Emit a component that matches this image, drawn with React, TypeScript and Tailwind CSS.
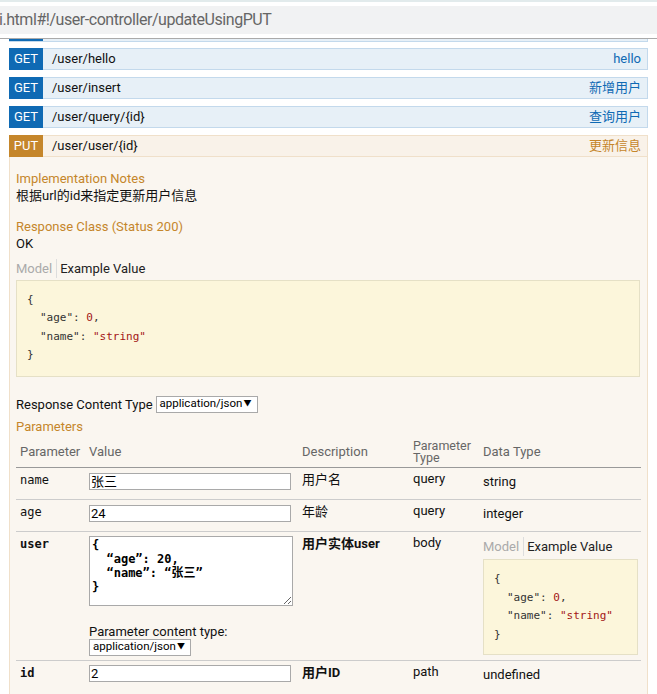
import { ReactNode } from 'react'

const sans = '[font-family:Roboto,"Noto_Sans_CJK_SC",sans-serif]'
const mono = '[font-family:"DejaVu_Sans_Mono","Noto_Sans_CJK_SC",monospace]'

function OpRow({ method, path, summary, put }: { method: string; path: string; summary: string; put?: boolean }) {
  return (
    <div
      className={`flex h-[22px] items-stretch border border-l-0 ${
        put ? 'border-[#f0e0ca] bg-[#f9f2e9]' : 'border-[#c3d9ec] bg-[#e7f0f7]'
      }`}
    >
      <div
        className={`flex w-[34px] -my-px items-center justify-center text-[13px] text-white ${
          put ? 'bg-[#c5862b]' : 'bg-[#0f6ab4]'
        }`}
      >
        {method}
      </div>
      <div className="flex flex-1 items-center pl-[9px] text-[13px] text-[#111]">{path}</div>
      <div className={`flex items-center pr-[6px] text-[13px] ${put ? 'text-[#c5862b]' : 'text-[#0f6ab4]'}`}>
        {summary}
      </div>
    </div>
  )
}

function Select({ w }: { w: string }) {
  return (
    <div
      className={`flex h-[17px] ${w} items-center justify-between border border-[#a9a9a9] bg-white pl-[3px] pr-[5px] text-[11.5px] leading-none text-black`}
    >
      <span>application/json</span>
      <span className="text-[8px]">▼</span>
    </div>
  )
}

function ModelTabs() {
  return (
    <div className="flex items-center text-[13px]">
      <span className="pr-[4px] text-[#aaa]">Model</span>
      <span className="h-[19px] w-px bg-[#ddd]" />
      <span className="pl-[3px] text-[#222]">Example Value</span>
    </div>
  )
}

function Sample({ className }: { className: string }) {
  return (
    <div
      className={`border border-[#e5e0c6] bg-[#fcf6db] text-[11px] leading-[18.5px] text-[#333] ${mono} ${className}`}
    >
      <div>{'{'}</div>
      <div className="pl-[13px]">
        "age": <span className="text-[#a31515]">0</span>,
      </div>
      <div className="pl-[13px]">
        "name": <span className="text-[#a31515]">"string"</span>
      </div>
      <div>{'}'}</div>
    </div>
  )
}

function Cell({ children, className = '' }: { children?: ReactNode; className?: string }) {
  return <div className={`px-[4px] ${className}`}>{children}</div>
}

export default function App() {
  const th = 'flex items-end pb-[7px] px-[4px] text-[13px] text-[#666]'
  const row = 'grid grid-cols-[69px_213px_111px_70px_162px]'
  const input =
    'h-[17px] w-[202px] border border-[#a9a9a9] bg-white px-[1px] text-[13px] text-black outline-none'
  return (
    <div className={`h-[694px] w-[657px] overflow-hidden bg-white ${sans}`}>
      <div className="h-[2px] bg-[#e2ebec]" />
      <div className="h-[4px]" />
      <div className="flex h-[28px] items-center bg-[#f1f2f3] text-[16px] tracking-[-0.45px] text-[#666]">
        <span className="-ml-[1px]">i.html#!/user-controller/updateUsingPUT</span>
      </div>
      <div className="h-[4px]" />
      <div className="h-px bg-[#aaa]" />

      <div className="px-[9px]">
        <div className="flex h-[3px] border-b border-r border-[#c3d9ec] bg-[#e7f0f7]">
          <div className="w-[34px] bg-[#0f6ab4]" />
        </div>
        <div className="mt-[6px] flex flex-col gap-[7px]">
          <OpRow method="GET" path="/user/hello" summary="hello" />
          <OpRow method="GET" path="/user/insert" summary="新增用户" />
          <OpRow method="GET" path="/user/query/{id}" summary="查询用户" />
          <OpRow method="PUT" path="/user/user/{id}" summary="更新信息" put />
        </div>

        <div className="h-[560px] border-x border-[#f0e0ca] bg-[#faf6f0] pl-[6px] pr-[7px] pt-[13px] text-[13px] text-[#111]">
          <div className="leading-[17px] text-[#c5862b]">Implementation Notes</div>
          <div className="leading-[17px]">根据url的id来指定更新用户信息</div>

          <div className="mt-[14px] leading-[17px] text-[#c5862b]">Response Class (Status 200)</div>
          <div className="leading-[17px]">OK</div>

          <div className="mt-[7px]">
            <ModelTabs />
          </div>
          <Sample className="mt-[1px] h-[97px] pl-[10px] pt-[10px]" />

          <div className="mt-[19px] flex items-center gap-[3px] leading-[17px]">
            <span>Response Content Type</span>
            <Select w="w-[102px]" />
          </div>
          <div className="mt-[5px] leading-[17px] text-[#c5862b]">Parameters</div>

          <div className="mt-[5px] w-[625px]">
            <div className={`${row} h-[28px] border-b border-[#999]`}>
              <div className={th}>Parameter</div>
              <div className={th}>Value</div>
              <div className={th}>Description</div>
              <div className="flex flex-col justify-end px-[4px] pb-[5px] text-[12.5px] leading-[12px] text-[#666]">
                <span>Parameter</span>
                <span>Type</span>
              </div>
              <div className={th}>Data Type</div>
            </div>

            <div className={`${row} h-[32px] border-b border-[#ccc]`}>
              <Cell className={`pt-[3px] text-[12px] ${mono}`}>name</Cell>
              <Cell className="pt-[4px]">
                <input className={input} defaultValue="张三" />
              </Cell>
              <Cell className="pt-[2px]">用户名</Cell>
              <Cell className="pt-[1px]">query</Cell>
              <Cell className="pt-[4px]">string</Cell>
            </div>

            <div className={`${row} h-[32px] border-b border-[#ccc]`}>
              <Cell className={`pt-[3px] text-[12px] ${mono}`}>age</Cell>
              <Cell className="pt-[4px]">
                <input className={input} defaultValue="24" />
              </Cell>
              <Cell className="pt-[2px]">年龄</Cell>
              <Cell className="pt-[1px]">query</Cell>
              <Cell className="pt-[4px]">integer</Cell>
            </div>

            <div className={`${row} h-[129px] border-b border-[#ccc]`}>
              <Cell className={`pt-[3px] text-[12px] font-bold ${mono}`}>user</Cell>
              <Cell className="pt-[4px]">
                <textarea
                  className={`block h-[70px] w-[204px] border border-[#a9a9a9] bg-white px-[2px] py-[1px] text-[12px] font-bold leading-[14px] text-black outline-none ${mono}`}
                  defaultValue={'{\n  “age”: 20,\n  “name”: “张三”\n}'}
                />
                <div className="mt-[18px] leading-[15px]">Parameter content type:</div>
                <Select w="w-[102px]" />
              </Cell>
              <Cell className="pt-[2px] font-bold">用户实体user</Cell>
              <Cell className="pt-[1px]">body</Cell>
              <Cell className="pt-[5px]">
                <ModelTabs />
                <Sample className="mt-[3px] h-[96px] w-[155px] pl-[10px] pt-[10px]" />
              </Cell>
            </div>

            <div className={`${row} h-[34px]`}>
              <Cell className={`pt-[3px] text-[12px] font-bold ${mono}`}>id</Cell>
              <Cell className="pt-[3px]">
                <input className={input} defaultValue="2" />
              </Cell>
              <Cell className="pt-[2px] font-bold">用户ID</Cell>
              <Cell className="pt-[1px]">path</Cell>
              <Cell className="pt-[4px]">undefined</Cell>
            </div>
          </div>
        </div>
      </div>
    </div>
  )
}
